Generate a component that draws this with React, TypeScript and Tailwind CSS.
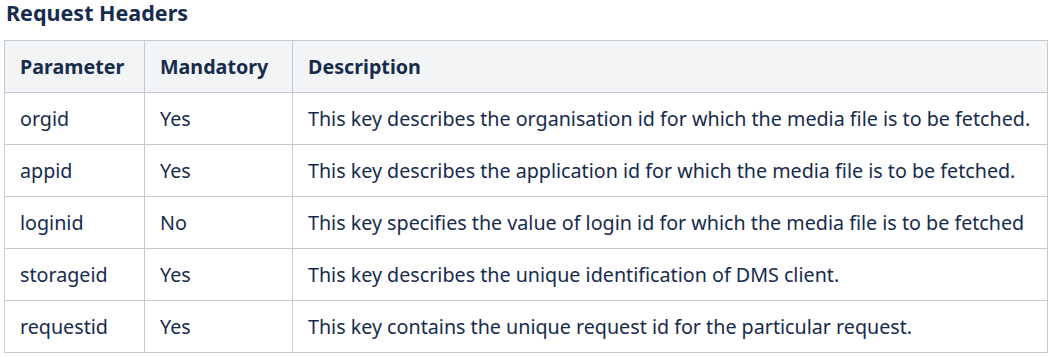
import React from 'react';

const rows = [
  { param: 'orgid', mandatory: 'Yes', desc: 'This key describes the organisation id for which the media file is to be fetched.' },
  { param: 'appid', mandatory: 'Yes', desc: 'This key describes the application id for which the media file is to be fetched.' },
  { param: 'loginid', mandatory: 'No', desc: 'This key specifies the value of login id for which the media file is to be fetched' },
  { param: 'storageid', mandatory: 'Yes', desc: 'This key describes the unique identification of DMS client.' },
  { param: 'requestid', mandatory: 'Yes', desc: 'This key contains the unique request id for the particular request.' },
];

export default function App() {
  return (
    <div className="bg-white w-[1054px] h-[357px] overflow-hidden px-[4px] text-[#172b4d] font-['Noto_Sans',sans-serif]">
      {/* Section title */}
      <h3 className="text-[21.5px] font-bold leading-[26px] pl-[2px] whitespace-nowrap">Request Headers</h3>

      <table className="mt-[14px] w-[1044px] border-collapse table-fixed text-[19.7px]">
        <colgroup>
          <col className="w-[140px]" />
          <col className="w-[148px]" />
          <col />
        </colgroup>
        <thead>
          <tr className="bg-[#f3f4f6]">
            <th className="h-[52px] border border-[#c4c9d6] px-[15px] text-left font-bold">Parameter</th>
            <th className="h-[52px] border border-[#c4c9d6] px-[15px] text-left font-bold">Mandatory</th>
            <th className="h-[52px] border border-[#c4c9d6] px-[15px] text-left font-bold">Description</th>
          </tr>
        </thead>
        <tbody>
          {rows.map((r) => (
            <tr key={r.param}>
              <td className="h-[52px] border border-[#c4c9d6] px-[15px]">{r.param}</td>
              <td className="h-[52px] border border-[#c4c9d6] px-[15px]">{r.mandatory}</td>
              <td className="h-[52px] border border-[#c4c9d6] px-[15px] whitespace-nowrap">{r.desc}</td>
            </tr>
          ))}
        </tbody>
      </table>
    </div>
  );
}
